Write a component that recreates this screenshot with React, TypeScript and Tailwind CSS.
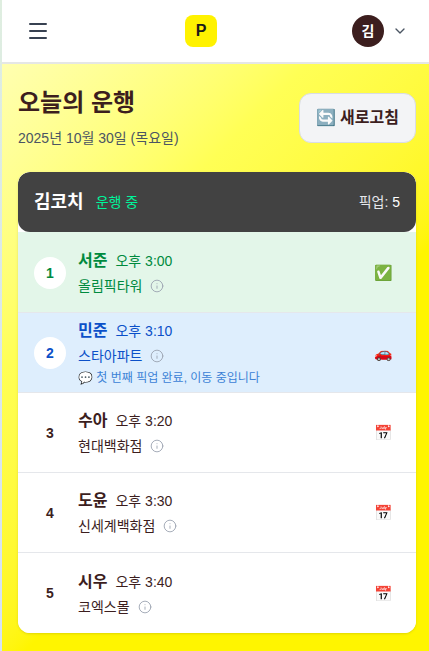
import { ChevronDown, Info } from "lucide-react";

type Tone = "done" | "active" | "wait";

const stops: { no: number; name: string; time: string; place: string; tone: Tone; note?: string }[] = [
  { no: 1, name: "서준", time: "오후 3:00", place: "올림픽타워", tone: "done" },
  { no: 2, name: "민준", time: "오후 3:10", place: "스타아파트", tone: "active", note: "첫 번째 픽업 완료, 이동 중입니다" },
  { no: 3, name: "수아", time: "오후 3:20", place: "현대백화점", tone: "wait" },
  { no: 4, name: "도윤", time: "오후 3:30", place: "신세계백화점", tone: "wait" },
  { no: 5, name: "시우", time: "오후 3:40", place: "코엑스몰", tone: "wait" },
];

const emoji = { done: "✅", active: "🚗", wait: "📅" };

function StopRow({ no, name, time, place, tone, note }: (typeof stops)[number]) {
  const rowTone =
    tone === "done"
      ? "h-[81px] border-t border-t-[#e3f6e9] bg-[#e3f6e9] text-[#008a3e]"
      : tone === "active"
        ? "h-20 bg-[#deeefd] text-[#0b50c8]"
        : "h-20 bg-white text-[#3c1e1e]";
  return (
    <div className={`flex items-center border-b border-b-[#e5e7eb] px-4 last:border-b-0 ${rowTone}`}>
      <div className={`flex h-8 w-8 shrink-0 items-center justify-center rounded-full text-sm font-bold ${tone === "wait" ? "" : "bg-white"}`}>
        {no}
      </div>
      <div className="ml-[12px] flex-1">
        <div className="flex items-center gap-2">
          <span className="text-base font-bold">{name}</span>
          <span className="text-sm">{time}</span>
        </div>
        <div className="mt-[3px] flex items-center gap-2 text-sm leading-5">
          <span>{place}</span>
          <Info className="h-[14px] w-[14px] text-gray-400" strokeWidth={1.5} />
        </div>
        {note && (
          <div className="mt-1 text-xs leading-4 text-[#3b82d6]">💬 {note}</div>
        )}
      </div>
      <span className="mr-[1px] w-8 shrink-0 text-center text-[15px] leading-none">{emoji[tone]}</span>
    </div>
  );
}

export default function App() {
  return (
    <div
      className="h-[651px] overflow-hidden bg-gradient-to-b from-[#dfeee0] to-[#d5e2f5] text-[#3c1e1e]"
      style={{ fontFamily: '"Liberation Sans", "Noto Sans CJK KR", sans-serif' }}
    >
      <div className="ml-[2px] flex h-full w-[430px] flex-col">
        <header className="flex h-[64px] shrink-0 items-center justify-between border-b-2 border-[#e5e7e5] bg-white px-6">
          <svg className="h-6 w-6 text-[#374151]" viewBox="0 0 24 24" fill="none" stroke="currentColor" strokeWidth="2" strokeLinecap="round">
            <path d="M4 5h16M4 12h16M4 19h16" />
          </svg>
          <div className="flex h-8 w-8 items-center justify-center rounded-lg bg-[#fff200] text-base font-bold text-[#1a1a1a]">P</div>
          <div className="flex items-center gap-2">
            <div className="flex h-8 w-8 items-center justify-center rounded-full bg-[#3c1e1e] text-sm font-bold text-white">김</div>
            <ChevronDown className="h-4 w-4 text-[#4b5563]" />
          </div>
        </header>
        <main className="flex-1 bg-linear-135 from-[#ffffb0] via-[#ffff55] via-30% to-[#fff500] to-60% p-4">
          <div className="mb-6 flex items-start justify-between">
            <div className="pt-[7px]">
              <h1 className="text-2xl font-bold">오늘의 운행</h1>
              <p className="mt-[9px] text-sm text-[#4b5563]">2025년 10월 30일 (목요일)</p>
            </div>
            <button className="mt-[13px] rounded-xl border border-[#d9dce3] bg-[#f3f4f6] px-4 py-3 text-base font-bold">🔄 새로고침</button>
          </div>
          <section className="overflow-hidden rounded-xl bg-white shadow-sm">
            <div className="flex h-[60px] items-center justify-between rounded-xl bg-[#424242] px-4">
              <div className="flex items-center gap-3">
                <span className="text-lg font-bold text-white">김코치</span>
                <span className="text-sm text-[#00f59b]">운행 중</span>
              </div>
              <span className="text-sm text-[#e5e7eb]">픽업: <span className="text-white">5</span></span>
            </div>
            {stops.map((stop) => (
              <StopRow key={stop.no} {...stop} />
            ))}
          </section>
        </main>
      </div>
    </div>
  );
}
